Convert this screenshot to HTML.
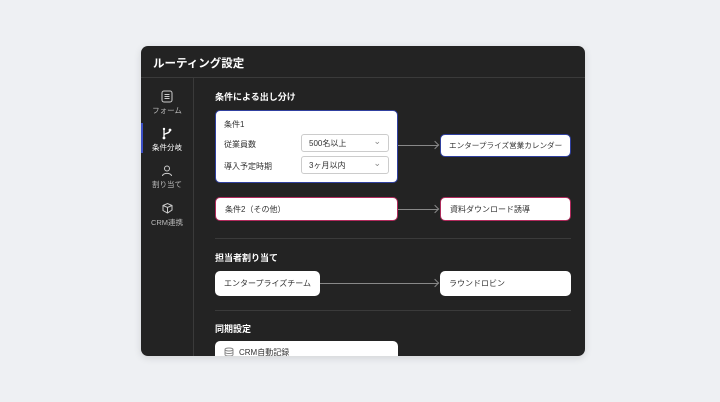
<!DOCTYPE html><html><head><meta charset="utf-8"><style>
*{margin:0;padding:0;box-sizing:border-box}
body{width:720px;height:402px;background:#eef0f3;font-family:"Liberation Sans","Noto Sans CJK JP",sans-serif;position:relative;overflow:hidden}
.p{position:absolute;left:141px;top:46px;width:444px;height:310px;background:#232323;border-radius:7px;overflow:hidden;box-shadow:0 2px 8px rgba(0,0,0,.12)}
.a{position:absolute}
.t{color:#fff;font-size:11px;font-weight:bold}
.box{position:absolute;background:#fff;border-radius:5px;font-size:8px;color:#333;display:flex;align-items:center;padding-left:9px;white-space:nowrap}
.sel{position:absolute;left:85px;width:88px;height:18px;border:1px solid #ccc;border-radius:3px;font-size:8px;display:flex;align-items:center;padding-left:7px;color:#333}
.sel:after{content:"⌄";position:absolute;right:7px;top:1px;color:#888;font-size:9px}
.ln{position:absolute;height:1px;background:#888}
.ln:after{content:"";position:absolute;right:0;top:-3px;width:5px;height:5px;border-top:1px solid #888;border-right:1px solid #888;transform:rotate(45deg)}
.sb{position:absolute;width:52px;text-align:center;color:#bbb;font-size:7.5px}
.sb svg{display:block;margin:0 auto 2px}
.hr{position:absolute;left:74px;width:356px;height:1px;background:#3a3a3a}
</style></head><body>
<div class="p">
<div class="a t" style="left:12px;top:9px;font-size:11.5px">ルーティング設定</div>
<div class="a" style="left:0;top:31px;width:444px;height:1px;background:#3a3a3a"></div>
<div class="a" style="left:52px;top:31px;width:1px;height:280px;background:#3a3a3a"></div>
<div class="a" style="left:0;top:77px;width:2px;height:30px;background:#3b4fc4"></div>
<div class="sb" style="top:44px"><svg width="12" height="13" viewBox="0 0 12 13"><rect x="1" y="1" width="10" height="11" rx="2" fill="none" stroke="#ccc"/><path d="M3.5 4.5h5M3.5 6.5h5M3.5 8.5h5" stroke="#ccc"/></svg><div>フォーム</div></div>
<div class="sb" style="top:81px;color:#fff"><svg width="12" height="13" viewBox="0 0 12 13"><path d="M3 2v9M3 8c0-2 6-1 6-5" stroke="#fff" fill="none" stroke-width="1.3"/><circle cx="3" cy="11" r="1.4" fill="#fff"/><circle cx="9" cy="3" r="1.4" fill="#fff"/><circle cx="3" cy="2" r="1.2" fill="#fff"/></svg><div>条件分岐</div></div>
<div class="sb" style="top:118px"><svg width="12" height="13" viewBox="0 0 12 13"><circle cx="6" cy="4.5" r="2.5" fill="none" stroke="#ccc"/><path d="M1.5 12c0-3.5 9-3.5 9 0" fill="none" stroke="#ccc"/></svg><div>割り当て</div></div>
<div class="sb" style="top:156px"><svg width="13" height="13" viewBox="0 0 13 13"><path d="M2 3.5l4.5-2 4.5 2v4.5l-4.5 3-4.5-2.5z" fill="none" stroke="#ccc"/><path d="M2 3.5l4.5 2 4.5-2M6.5 5.5v5.5" stroke="#ccc" fill="none"/></svg><div>CRM連携</div></div>
<div class="a t" style="left:74px;top:44px;font-size:9px">条件による出し分け</div>
<div class="box" style="left:74px;top:64px;width:183px;height:73px;border:1.5px solid #3040a0;display:block;padding:0">
<div class="a" style="left:8px;top:8px">条件1</div>
<div class="a" style="left:8px;top:28px">従業員数</div>
<div class="a" style="left:8px;top:50px">導入予定時期</div>
<div class="sel" style="top:23px">500名以上</div>
<div class="sel" style="top:45px">3ヶ月以内</div>
</div>
<div class="box" style="left:299px;top:88px;width:131px;height:23px;border:1.5px solid #3040a0;font-size:7.6px;padding-left:8px">エンタープライズ営業カレンダー</div>
<div class="box" style="left:74px;top:151px;width:183px;height:24px;border:1.5px solid #b02a5c">条件2（その他）</div>
<div class="box" style="left:299px;top:151px;width:131px;height:24px;border:1.5px solid #b02a5c">資料ダウンロード誘導</div>
<div class="ln" style="left:257px;top:99px;width:40px"></div>
<div class="ln" style="left:257px;top:163px;width:40px"></div>
<div class="hr" style="top:192px"></div>
<div class="a t" style="left:74px;top:205px;font-size:9px">担当者割り当て</div>
<div class="box" style="left:74px;top:225px;width:105px;height:25px">エンタープライズチーム</div>
<div class="box" style="left:299px;top:225px;width:131px;height:25px">ラウンドロビン</div>
<div class="ln" style="left:179px;top:237px;width:118px"></div>
<div class="hr" style="top:264px"></div>
<div class="a t" style="left:74px;top:276px;font-size:9px">同期設定</div>
<div class="box" style="left:74px;top:295px;width:183px;height:30px;align-items:flex-start;padding-top:6px"><svg width="10" height="10" viewBox="0 0 10 10" style="margin-right:5px"><ellipse cx="5" cy="2.5" rx="4" ry="1.5" fill="none" stroke="#888"/><path d="M1 2.5v5c0 2 8 2 8 0v-5M1 5c0 2 8 2 8 0" fill="none" stroke="#888"/></svg>CRM自動記録</div>
</div>
</body></html>
